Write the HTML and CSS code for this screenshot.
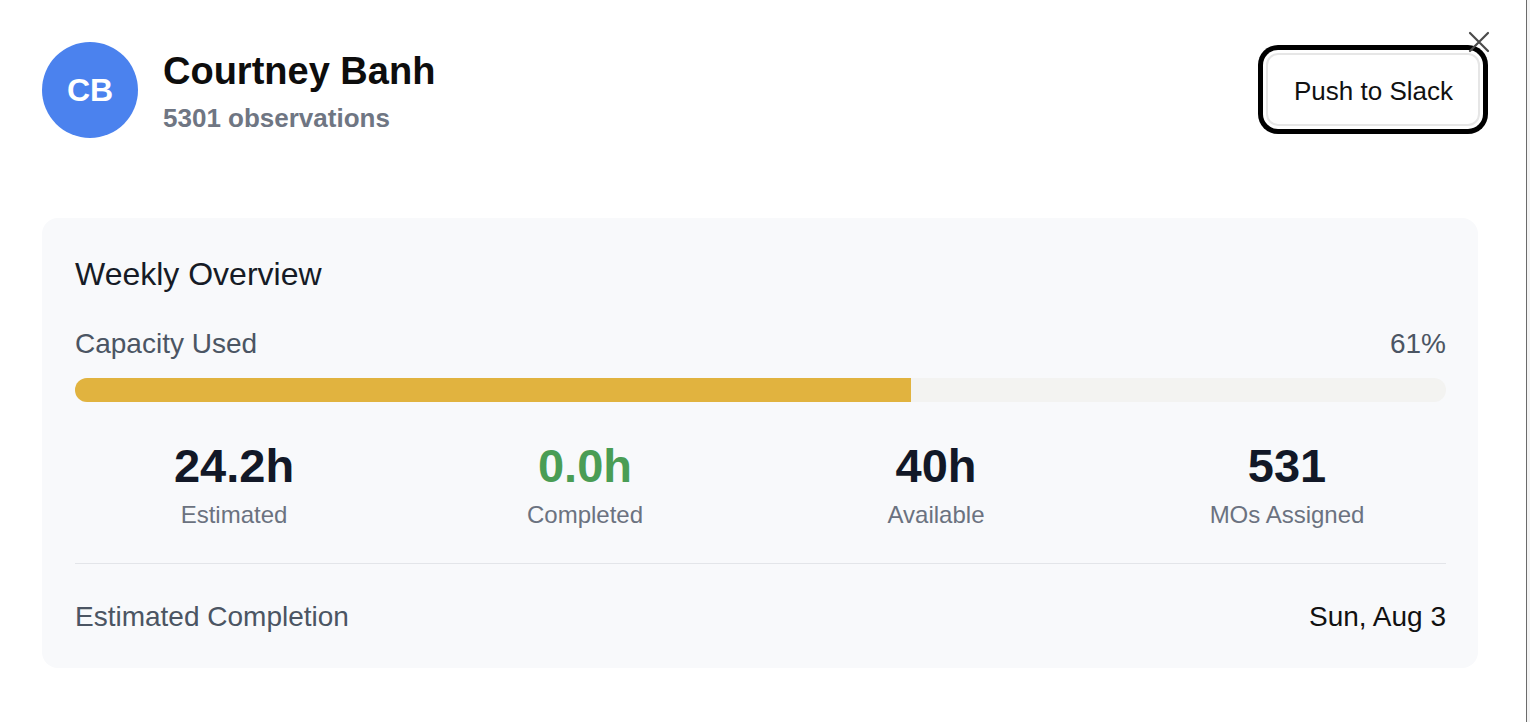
FILE: index.html
```html
<!DOCTYPE html>
<html lang="en">
<head>
<meta charset="utf-8">
<title>Courtney Banh</title>
<link rel="stylesheet" href="styles.css">
</head>
<body>
<div class="dialog">
  <button class="close" aria-label="Close">
    <svg width="22" height="22" viewBox="0 0 22 22"><path d="M2 2 L20 20 M20 2 L2 20" stroke="#4b4b4b" stroke-width="2.2" stroke-linecap="round" fill="none"/></svg>
  </button>
  <header class="header">
    <div class="person">
      <div class="avatar">CB</div>
      <div class="person-text">
        <h1 class="name">Courtney Banh</h1>
        <div class="obs">5301 observations</div>
      </div>
    </div>
    <button class="slack-btn">Push to Slack</button>
  </header>

  <section class="card">
    <h2 class="card-title">Weekly Overview</h2>
    <div class="cap-row">
      <span>Capacity Used</span>
      <span>61%</span>
    </div>
    <div class="bar"><div class="bar-fill" style="width:61%"></div></div>
    <div class="stats">
      <div class="stat"><div class="stat-val">24.2h</div><div class="stat-label">Estimated</div></div>
      <div class="stat"><div class="stat-val green">0.0h</div><div class="stat-label">Completed</div></div>
      <div class="stat"><div class="stat-val">40h</div><div class="stat-label">Available</div></div>
      <div class="stat"><div class="stat-val">531</div><div class="stat-label">MOs Assigned</div></div>
    </div>
    <div class="completion">
      <span class="comp-label">Estimated Completion</span>
      <span class="comp-val">Sun, Aug 3</span>
    </div>
  </section>
</div>
<div class="edge"></div>
</body>
</html>
```

FILE: styles.css
```css
* { box-sizing: border-box; }
html, body { margin: 0; padding: 0; }
body {
  background: #ffffff;
  font-family: "Liberation Sans", Arial, Helvetica, sans-serif;
  width: 1530px;
  height: 722px;
  overflow: hidden;
  display: flex;
}
.dialog {
  position: relative;
  width: 1526px;
  height: 722px;
  padding: 42px 48px 0 42px;
  background: #ffffff;
}
.edge {
  width: 4px;
  height: 722px;
  border-left: 1px solid #6b6b6b;
  background: #f4f4f4;
}
.close {
  position: absolute;
  top: 31px;
  left: 1468px;
  width: 22px;
  height: 22px;
  padding: 0;
  border: 0;
  background: transparent;
  z-index: 2;
  line-height: 0;
}
.header {
  display: flex;
  justify-content: space-between;
  align-items: center;
}
.person {
  display: flex;
  align-items: flex-start;
  gap: 25px;
}
.avatar {
  width: 96px;
  height: 96px;
  border-radius: 50%;
  background: #4b82ee;
  color: #ffffff;
  font-weight: 700;
  font-size: 32px;
  display: flex;
  align-items: center;
  justify-content: center;
  flex-shrink: 0;
}
.person-text {
  padding-top: 6px;
}
.name {
  margin: 0;
  font-size: 38px;
  line-height: 46px;
  font-weight: 700;
  color: #0d0d0d;
}
.obs {
  margin-top: 5px;
  font-size: 26px;
  line-height: 39px;
  font-weight: 700;
  color: #6f7683;
}
.slack-btn {
  margin-right: -2px;
  margin-top: -1px;
  font-family: inherit;
  font-size: 26px;
  line-height: 39px;
  color: #111111;
  background: #ffffff;
  border: 2px solid #e6e6e6;
  border-radius: 12px;
  padding: 17px 25px 13px 26px;
  box-shadow: 0 0 0 3px #ffffff, 0 0 0 8px #000000;
}
.card {
  margin-top: 80px;
  background: #f8f9fb;
  border-radius: 16px;
  padding: 32px 32px 30px 33px;
}
.card-title {
  margin: 0;
  font-size: 32px;
  line-height: 48px;
  font-weight: 400;
  color: #161b26;
}
.cap-row {
  margin-top: 25px;
  display: flex;
  justify-content: space-between;
  font-size: 28px;
  line-height: 42px;
  color: #4b5563;
}
.bar {
  margin-top: 13px;
  height: 24px;
  border-radius: 12px;
  background: #f3f3f1;
  overflow: hidden;
}
.bar-fill {
  height: 100%;
  background: #e1b33f;
}
.stats {
  margin-top: 36px;
  display: grid;
  grid-template-columns: repeat(4, 1fr);
  column-gap: 33px;
  padding-bottom: 30px;
  border-bottom: 1px solid #e3e5e9;
  text-align: center;
}
.stat-val {
  font-size: 47px;
  line-height: 56px;
  font-weight: 700;
  color: #121827;
}
.stat-val.green { color: #4a9d55; }
.stat-label {
  margin-top: 3px;
  font-size: 24px;
  line-height: 36px;
  color: #6b7280;
}
.completion {
  padding-top: 32px;
  display: flex;
  justify-content: space-between;
  font-size: 28px;
  line-height: 42px;
}
.comp-label { color: #4b5563; }
.comp-val { color: #111111; }
```
